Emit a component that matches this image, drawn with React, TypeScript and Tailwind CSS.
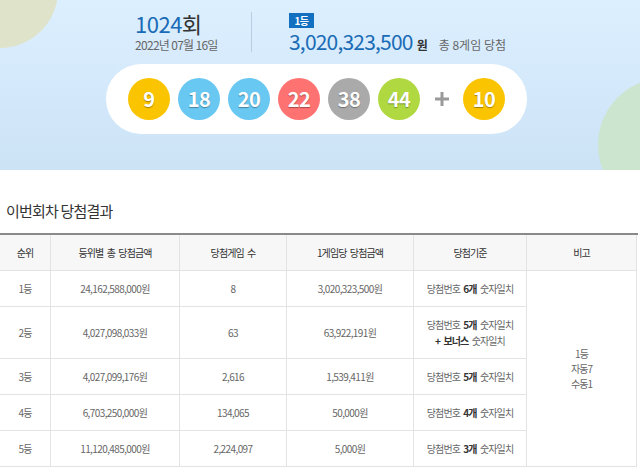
import React from 'react';

const balls = [
  { n: 9, color: 'bg-[#fbc400]' },
  { n: 18, color: 'bg-[#69c8f2]' },
  { n: 20, color: 'bg-[#69c8f2]' },
  { n: 22, color: 'bg-[#ff7272]' },
  { n: 38, color: 'bg-[#aaaaaa]' },
  { n: 44, color: 'bg-[#b0d840]' },
];

const headers = ['순위', '등위별 총 당첨금액', '당첨게임 수', '1게임당 당첨금액', '당첨기준', '비고'];

const rows = [
  { rank: '1등', total: '24,162,588,000원', count: '8', per: '3,020,323,500원', rule: <>당첨번호 <b className="text-[#333]">6개</b> 숫자일치</>, h: 'h-[36px]' },
  {
    rank: '2등', total: '4,027,098,033원', count: '63', per: '63,922,191원',
    rule: <>당첨번호 <b className="text-[#333]">5개</b> 숫자일치<br /><b className="text-[#333]">+ 보너스</b> 숫자일치</>,
    h: 'h-[52px]',
  },
  { rank: '3등', total: '4,027,099,176원', count: '2,616', per: '1,539,411원', rule: <>당첨번호 <b className="text-[#333]">5개</b> 숫자일치</>, h: 'h-[36px]' },
  { rank: '4등', total: '6,703,250,000원', count: '134,065', per: '50,000원', rule: <>당첨번호 <b className="text-[#333]">4개</b> 숫자일치</>, h: 'h-[36px]' },
  { rank: '5등', total: '11,120,485,000원', count: '2,224,097', per: '5,000원', rule: <>당첨번호 <b className="text-[#333]">3개</b> 숫자일치</>, h: 'h-[36px]' },
];

const Ball = ({ n, color }: { n: number; color: string }) => (
  <div className={`w-[42px] h-[42px] rounded-full ${color} flex items-center justify-center text-white text-[20px] font-bold tracking-[-0.5px] [text-shadow:0_1px_1px_rgba(0,0,0,0.35)]`}>
    {n}
  </div>
);

const cell = 'flex items-center justify-center border-b border-r border-[#e3e3e3] text-center';

const App = () => {
  return (
    <div className="w-[640px] h-[469px] overflow-hidden bg-white font-['Noto_Sans_CJK_KR',sans-serif]">
      {/* Winning numbers banner */}
      <div className="relative h-[170px] overflow-hidden bg-linear-to-b from-[#dcefff] to-[#cce3f6]">
        <div className="absolute left-[-58px] top-[-68px] w-[116px] h-[116px] rounded-full bg-[#dfe3c9]" />
        <div className="absolute right-[-92px] top-[78px] w-[134px] h-[134px] rounded-full bg-[#cbe5cf]" />

        <div className="relative ml-[106px] w-[421px] pt-[10px]">
          <div className="flex items-start">
            <div className="ml-[29px] w-[116px]">
              <div className="text-[22px] leading-[26px] tracking-[-0.5px] text-[#1a6bb5]">
                1024<span className="text-[#333]">회</span>
              </div>
              <div className="mt-[2px] text-[12px] leading-[14px] tracking-[-0.7px] text-[#666]">2022년 07월 16일</div>
            </div>
            <div className="mt-[2px] w-px h-[40px] bg-[#b7cde2]" />
            <div className="ml-[37px]">
              <div className="mt-[3px] w-[25px] h-[15px] bg-[#1170c0] text-white text-[10px] font-bold leading-[15px] text-center tracking-[-0.5px]">
                1등
              </div>
              <div className="flex items-baseline mt-[3px] leading-[20px]">
                <span className="text-[21px] tracking-[-0.8px] text-[#1a6bb5]">3,020,323,500</span>
                <span className="ml-[4px] text-[12px] font-bold text-[#333]">원</span>
                <span className="ml-[11px] text-[12px] text-[#666]">총 8게임 당첨</span>
              </div>
            </div>
          </div>

          <div className="mt-[9px] h-[70px] rounded-full bg-white flex items-center justify-center">
            <div className="flex items-center gap-[8px]">
              {balls.map(b => (
                <Ball key={b.n} n={b.n} color={b.color} />
              ))}
            </div>
            <div className="w-[43px] flex justify-center">
              <svg width="14" height="14" viewBox="0 0 14 14">
                <rect x="5.5" y="0" width="3" height="14" fill="#9a9a9a" />
                <rect x="0" y="5.5" width="14" height="3" fill="#9a9a9a" />
              </svg>
            </div>
            <Ball n={10} color="bg-[#fbc400]" />
          </div>
        </div>
      </div>

      {/* Result table */}
      <div className="pt-[31px]">
        <h2 className="ml-[6px] text-[15px] leading-[20px] tracking-[-0.8px] text-[#333] font-normal">이번회차 당첨결과</h2>
        <div className="mt-[12px] w-[638px] border-t-2 border-[#8a8a8a] grid grid-cols-[51px_129px_107px_127px_113px_110px] text-[10px] tracking-[-0.9px] [word-spacing:2px] text-[#666]">
          {headers.map(h => (
            <div key={h} className={`${cell} h-[36px] bg-[#f7f7f7] text-[#333]`}>
              {h}
            </div>
          ))}
          <div className="col-start-6 row-start-2 row-span-5 flex items-center justify-center border-r border-b border-[#e3e3e3] text-center leading-[15px]">
            <div>
              1등<br />자동7<br />수동1
            </div>
          </div>
          {rows.map(r => (
            <React.Fragment key={r.rank}>
              <div className={`${cell} ${r.h}`}>{r.rank}</div>
              <div className={`${cell} ${r.h} tracking-[-0.6px]`}>{r.total}</div>
              <div className={`${cell} ${r.h} tracking-[-0.6px]`}>{r.count}</div>
              <div className={`${cell} ${r.h} tracking-[-0.6px]`}>{r.per}</div>
              <div className={`${cell} ${r.h} leading-[16px]`}>
                <div>{r.rule}</div>
              </div>
            </React.Fragment>
          ))}
        </div>
      </div>
    </div>
  );
};

export default App;
